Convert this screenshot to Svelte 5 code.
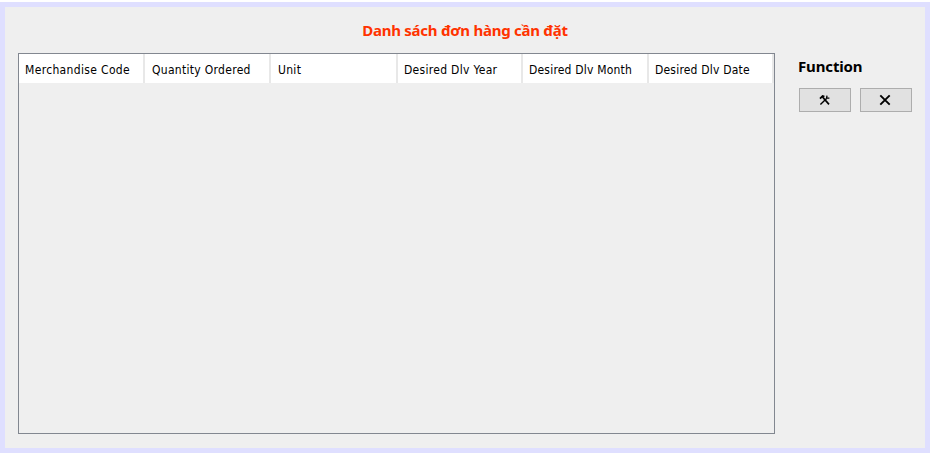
<script>
  const columns = [
    { label: 'Merchandise Code', width: 126, pad: 6, spacing: 0.34 },
    { label: 'Quantity Ordered', width: 126, pad: 7, spacing: 0.3 },
    { label: 'Unit', width: 127, pad: 7, spacing: 0.3 },
    { label: 'Desired Dlv Year', width: 125, pad: 6, spacing: 0.3 },
    { label: 'Desired Dlv Month', width: 126, pad: 6, spacing: 0.2 },
    { label: 'Desired Dlv Date', width: 125, pad: 6, spacing: 0.2 }
  ];
</script>

<main>
  <h1>Danh sách đơn hàng cần đặt</h1>
  <div class="content">
    <div class="table">
      <div class="header">
        {#each columns as col}
          <div class="cell" style="width: {col.width}px; padding-left: {col.pad}px; letter-spacing: {col.spacing}px">{col.label}</div>
        {/each}
      </div>
    </div>
    <aside>
      <h2>Function</h2>
      <div class="buttons">
        <button aria-label="Edit">
          <svg width="12" height="12" viewBox="0 0 12 12" fill="none" stroke="#000">
            <path d="M1 4.6 L3.6 2 L5.4 2.6" stroke-width="1.8" />
            <path d="M3.5 3 L10 10.4" stroke-width="1.7" />
            <path d="M1.4 10.4 L7.6 4.6" stroke-width="1.4" />
            <path d="M8 1.6 L7.6 4.2 L10.4 4.2" stroke-width="1.3" />
          </svg>
        </button>
        <button aria-label="Delete">
          <svg class="cross" width="12" height="12" viewBox="0 0 12 12" fill="none" stroke="#000" stroke-width="1.9">
            <path d="M1.3 1.3 L10.7 10.7 M10.7 1.3 L1.3 10.7" />
          </svg>
        </button>
      </div>
    </aside>
  </div>
</main>

<style>
  :global(body) { background: #fff; }
  :global(#app) { display: flow-root; }
  main {
    box-sizing: border-box;
    width: 930px;
    height: 451px;
    margin-top: 2px;
    border: 5px solid #dfdfff;
    background: #efefef;
    padding: 12px 13px 14px;
    font-family: "DejaVu Sans Condensed", "DejaVu Sans", sans-serif;
    color: #000;
    display: flex;
    flex-direction: column;
  }
  h1 {
    margin: 0 0 12px;
    height: 22px;
    font: bold 15px/22px "Noto Sans", sans-serif;
    letter-spacing: -0.26px;
    text-align: center;
    color: #ff3300;
    white-space: nowrap;
  }
  .content { display: flex; flex: 1; }
  .table {
    box-sizing: border-box;
    width: 757px;
    height: 381px;
    border: 1px solid #828790;
  }
  .header { display: flex; height: 29px; background: #fff; }
  .cell {
    box-sizing: border-box;
    flex: none;
    border-right: 2px solid #e8e8e8;
    font-size: 12px;
    line-height: 33px;
    height: 29px;
    white-space: nowrap;
  }
  aside { margin-left: 24px; }
  h2 {
    margin: 3px 0 12px -1px;
    font: bold 15px/20px "Noto Sans", sans-serif;
    letter-spacing: -0.15px;
  }
  .buttons { display: flex; gap: 9px; }
  button {
    box-sizing: border-box;
    width: 52px;
    height: 24px;
    padding: 0;
    border: 1px solid #adadad;
    background: #e1e1e1;
    display: flex;
    align-items: center;
    justify-content: center;
  }
  .cross { margin-right: 2px; }
</style>
